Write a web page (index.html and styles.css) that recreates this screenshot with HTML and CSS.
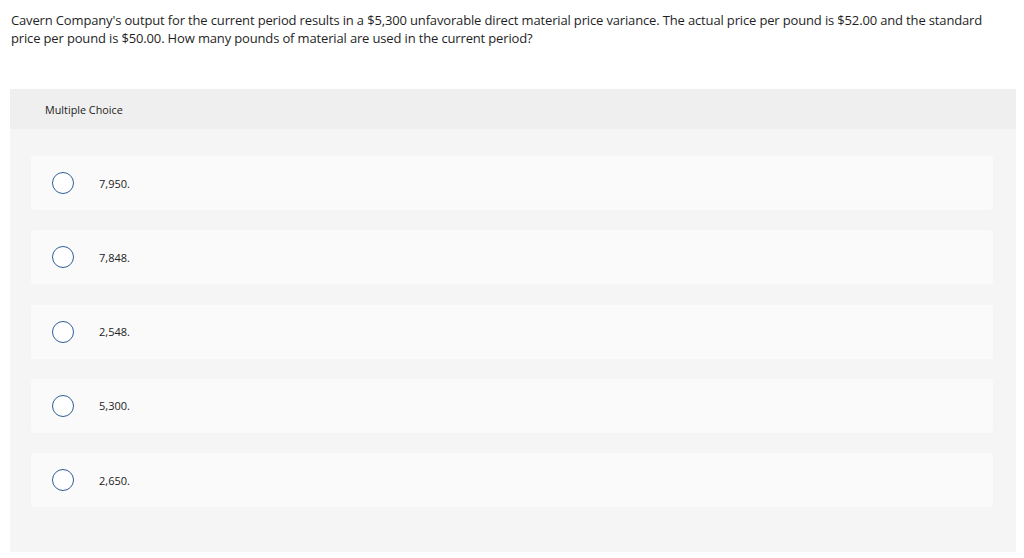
FILE: index.html
```html
<!DOCTYPE html>
<html>
<head>
<meta charset="utf-8">
<link rel="stylesheet" href="styles.css">
</head>
<body>
<div class="page">
  <p class="question">Cavern Company's output for the current period results in a $5,300 unfavorable direct material price variance. The actual price per pound is $52.00 and the standard price per pound is $50.00. How many pounds of material are used in the current period?</p>
  <div class="panel">
    <div class="panel-head">Multiple Choice</div>
    <div class="panel-body">
      <div class="option"><span class="radio"></span><span class="label">7,950.</span></div>
      <div class="option"><span class="radio"></span><span class="label">7,848.</span></div>
      <div class="option"><span class="radio"></span><span class="label">2,548.</span></div>
      <div class="option"><span class="radio"></span><span class="label">5,300.</span></div>
      <div class="option"><span class="radio"></span><span class="label">2,650.</span></div>
    </div>
  </div>
</div>
</body>
</html>
```

FILE: styles.css
```css
html, body {
  margin: 0;
  padding: 0;
  background: #ffffff;
}
body {
  font-family: "Open Sans", "Liberation Sans", sans-serif;
  color: #222;
}
.page {
  padding: 11px 8px 0 10px;
}
.question {
  margin: 0 0 0 1px;
  max-width: 990px;
  font-size: 13px;
  letter-spacing: -0.15px;
  line-height: 18px;
  color: #1f1f1f;
}
.panel {
  margin-top: 42px;
  width: 1006px;
  height: 463px;
  background: #f5f5f5;
}
.panel-head {
  height: 40px;
  background: #efefef;
  display: flex;
  align-items: center;
  padding-left: 35px;
  font-size: 10.8px;
  color: #222;
}
.panel-body {
  padding: 27px 23px 0 21px;
  display: flex;
  flex-direction: column;
  gap: 20.3px;
}
.option {
  height: 54px;
  background: #fafafa;
  border-radius: 3px;
  display: flex;
  align-items: center;
  padding-left: 21px;
}
.radio {
  width: 20px;
  height: 20px;
  border: 1.3px solid #2f5f98;
  border-radius: 50%;
  background: #fff;
  flex: none;
}
.label {
  margin-left: 25px;
  font-size: 11px;
  color: #222;
}
```
